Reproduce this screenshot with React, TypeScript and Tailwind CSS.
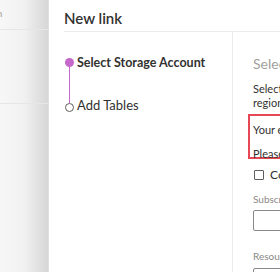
import React from "react";

export default function App() {
  return (
    <div className="flex h-[272px] w-[280px] overflow-hidden bg-white font-['Lato','Noto_Sans',sans-serif] text-[#323130]">
      {/* Background page behind the panel */}
      <div className="relative w-[48px] shrink-0 bg-gradient-to-r from-[#f7f7f7] via-[#f1f1f1] to-[#d6d6d6]">
        <div className="h-[30px] overflow-hidden whitespace-nowrap border-b border-[#e6e6e6] pt-[6px] text-[10px] text-[#a19f9d]">
          <span className="ml-[-27px]">Search</span>
        </div>
        <div className="h-[74px] border-b border-[#e6e6e6]" />
      </div>

      {/* Panel */}
      <div className="flex min-w-0 flex-1 flex-col border-l border-[#e1dfdd] bg-white">
        <div className="ml-[15px] h-[32px] shrink-0 border-b border-[#edebe9] pt-[9px] text-[15px] font-semibold leading-[18px]">
          New link
        </div>

        <div className="flex min-h-0 flex-1">
          {/* Stepper */}
          <div className="w-[184px] shrink-0 border-r border-[#edebe9] pl-[15px] pt-[24px]">
            <div className="flex items-start">
              <div className="flex w-[11px] flex-col items-center pt-[2px]">
                <span className="h-[9px] w-[9px] rounded-full bg-[#c668c9]" />
                <span className="h-[36px] w-[1px] bg-[#c668c9]" />
                <span className="h-[9px] w-[9px] rounded-full border border-[#605e5c] bg-white" />
              </div>
              <div className="ml-[2px] flex flex-col">
                <span className="text-[12.5px] font-bold leading-[14px]">Select Storage Account</span>
                <span className="mt-[27px] text-[13px] leading-[16px]">Add Tables</span>
              </div>
            </div>
          </div>

          {/* Form */}
          <div className="min-w-0 flex-1 overflow-hidden whitespace-nowrap pl-[15px] pt-[23px]">
            <div className="pl-[5px] text-[14px] leading-[18px] text-[#a19f9d]">Select storage account</div>
            <div className="mt-[9px] pl-[5px] text-[11px] leading-[14px]">
              Select a storage account in the same
              <br />
              region
            </div>
            <div className="mt-[4px] h-[45px] w-[80px] shrink-0 border-2 border-[#e74856] pl-[3px] pt-[7px] text-[11px] leading-[14px]">
              <div>Your environment</div>
              <div className="mt-[10px]">Please select</div>
            </div>
            <div className="mt-[7px] flex items-center pl-[6px] text-[12px]">
              <span className="h-[10px] w-[10px] shrink-0 rounded-[1px] border border-[#605e5c]" />
              <span className="ml-[6px]">Connect</span>
            </div>
            <div className="mt-[9px] pl-[5px] text-[10px] leading-[12px] text-[#8a8886]">Subscription</div>
            <div className="ml-[5px] mt-[5px] h-[21px] w-[80px] rounded-[2px] border border-[#8a8886]" />
            <div className="mt-[19px] pl-[5px] text-[10px] leading-[12px] text-[#8a8886]">Resource group</div>
            <div className="ml-[5px] mt-[6px] h-[21px] w-[80px] rounded-[2px] border border-[#8a8886]" />
          </div>
        </div>
      </div>
    </div>
  );
}
